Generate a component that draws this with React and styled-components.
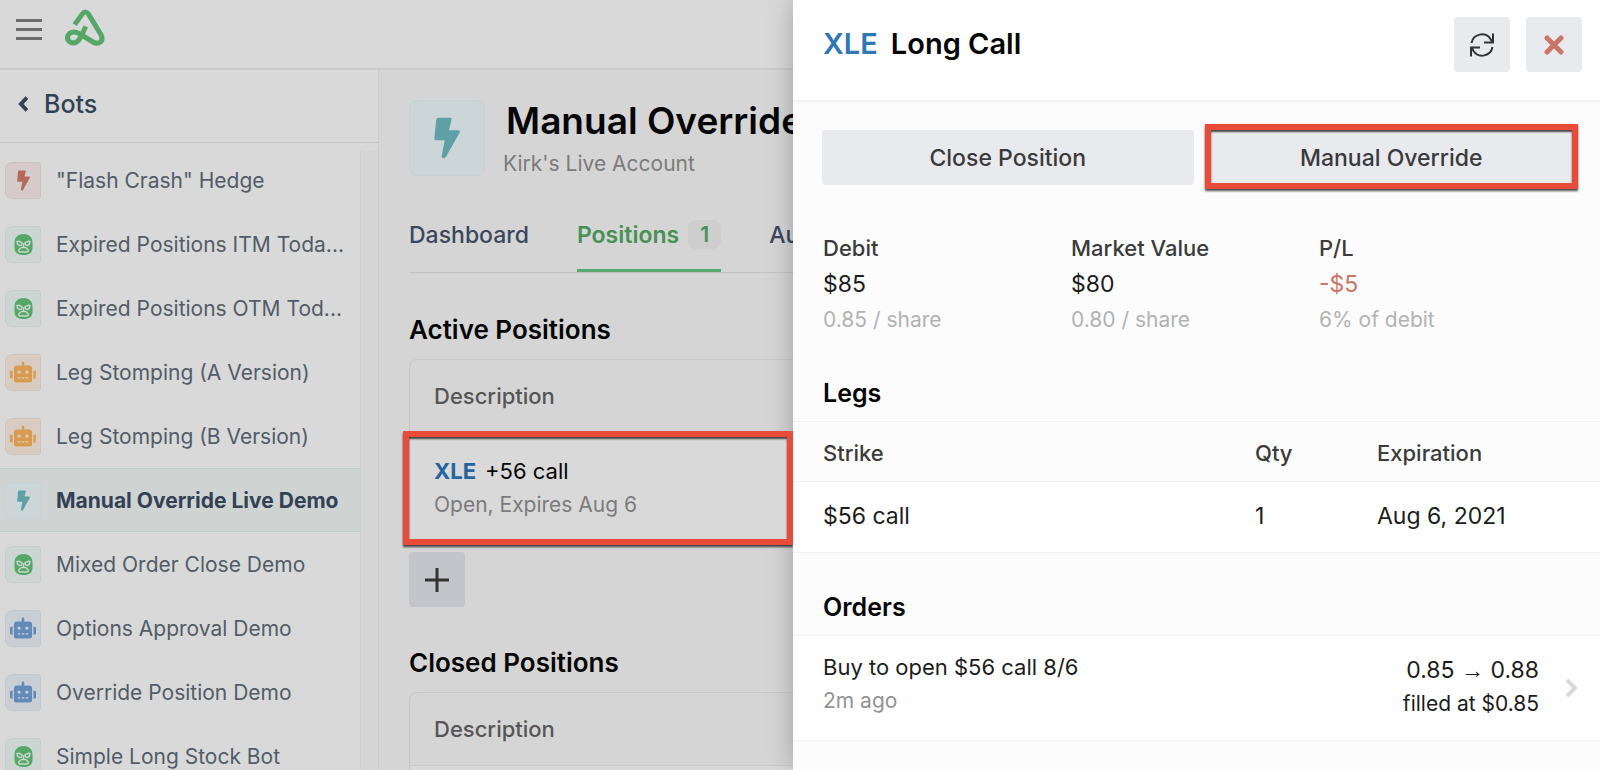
import styled, { createGlobalStyle, css } from "styled-components";
import { FaRobot } from "react-icons/fa";

const GlobalStyle = createGlobalStyle`
  *, *::before, *::after { box-sizing: border-box; }
  body {
    margin: 0;
    font-family: Inter, "Liberation Sans", sans-serif;
    font-size: 22px;
    color: #050505;
    background: #d5d5d5;
  }
  h1, h2, p, ul { margin: 0; padding: 0; }
  button { font: inherit; border: 0; padding: 0; cursor: pointer; }
`;

/* red marker frame laid over whatever is being pointed at */
const marked = css`
  position: relative;

  &::after {
    content: "";
    position: absolute;
    border: 6px solid #e94b3b;
    box-shadow: 0 2px 2px rgba(0, 0, 0, 0.7), inset 0 2px 2px rgba(0, 0, 0, 0.7);
    pointer-events: none;
  }
`;

const Page = styled.div`
  display: grid;
  grid-template-columns: minmax(0, 1fr) 807px;
  height: 100vh;
  overflow: hidden;
`;

const Workspace = styled.div`
  display: grid;
  grid-template-columns: 379px minmax(0, 1fr);
  grid-template-rows: 70px minmax(0, 1fr);
  min-height: 0;
`;

const TopBar = styled.header`
  grid-column: 1 / -1;
  display: flex;
  align-items: flex-start;
  gap: 23px;
  padding: 9px 16px;
  background: #d9d9d9;
  border-bottom: 2px solid #cbcbcb;
`;

const MenuButton = styled.button`
  display: flex;
  flex-direction: column;
  gap: 6px;
  width: 26px;
  padding: 10px 0;
  background: none;

  span {
    height: 3px;
    background: #6b6b6b;
  }
`;

const Sidebar = styled.nav`
  display: flex;
  flex-direction: column;
  min-height: 0;
  background: #d9d9d9;
  border-right: 1px solid #cbcbcb;
`;

const BackButton = styled.button`
  display: flex;
  flex: none;
  align-items: center;
  gap: 16px;
  height: 73px;
  padding: 0 18px 4px;
  background: none;
  border-bottom: 1px solid #c6c6c6;
  font-size: 25px;
  font-weight: 500;
  color: #334155;
`;

const BotList = styled.ul`
  flex: 1;
  min-height: 0;
  margin: 5px 18px 0 0;
  overflow: hidden;
  list-style: none;
  box-shadow: 1px 2px 0 #cecece, 18px 2px 0 #d5d5d5;
`;

const BotLink = styled.a`
  display: flex;
  align-items: center;
  gap: 15px;
  height: 64px;
  padding: 0 5px;
  border: solid transparent;
  border-width: 1px 0;
  font-size: 21px;
  color: #525c68;
  text-decoration: none;
  white-space: nowrap;

  ${(props) => props.$active && css`
    background: #cfd3d1;
    border-color: #b9cbc3;
    color: #334155;
    font-weight: 700;
  `}
`;

const tones = {
  red: { color: "#b5695c", bg: "#d6caca", line: "#cfc0c0" },
  green: { color: "#55a768", bg: "#ccd5d2", line: "#c0cfca" },
  orange: { color: "#d99b50", bg: "#d9cdc3", line: "#d3c3b5" },
  teal: { color: "#5f9fa6", bg: "#ccd6d9", line: "#c5d2d6" },
  blue: { color: "#6389b8", bg: "#cacfd6", line: "#c1c9d2" },
};

const Tile = styled.span`
  display: grid;
  flex: none;
  place-items: center;
  width: ${(props) => (props.$large ? 76 : 36)}px;
  height: ${(props) => (props.$large ? 76 : 37)}px;
  border: 1px solid ${(props) => tones[props.$tone].line};
  border-radius: ${(props) => (props.$large ? "8px" : "7px 3px 3px 7px")};
  background: ${(props) => tones[props.$tone].bg};
  color: ${(props) => tones[props.$tone].color};
`;

const Main = styled.main`
  min-height: 0;
  padding: 30px 0 0 30px;
  overflow: hidden;
`;

const BotHeader = styled.div`
  display: flex;
  gap: 18px;
  white-space: nowrap;
`;

const BotTitle = styled.h1`
  padding-left: 3px;
  font-size: 37px;
  line-height: 42px;
  font-weight: 600;
`;

const Account = styled.p`
  font-size: 21px;
  line-height: 44px;
  color: #7b7b7b;
`;

const Tabs = styled.nav`
  display: flex;
  gap: 48px;
  margin-top: 28px;
  border-bottom: 1px solid #c2c2c2;
  white-space: nowrap;
`;

const Tab = styled.a`
  display: flex;
  align-items: center;
  gap: 9px;
  height: 58px;
  padding-bottom: 14px;
  border-bottom: 3px solid ${(props) => (props.$active ? "#57a86d" : "transparent")};
  font-size: 23px;
  font-weight: ${(props) => (props.$active ? 600 : 500)};
  color: ${(props) => (props.$active ? "#479157" : "#3a475c")};
  text-decoration: none;
`;

const Badge = styled.span`
  width: 33px;
  border-radius: 8px;
  background: #cecece;
  font-size: 21px;
  line-height: 29px;
  text-align: center;
`;

const SectionTitle = styled.h2`
  font-size: 26px;
  line-height: 30px;
  font-weight: 600;
`;

const Positions = styled.section`
  padding-top: ${(props) => props.$top}px;
`;

const PositionTable = styled.table`
  width: 100%;
  margin-top: 14px;
  border: 1px solid #c8c8c8;
  border-right: 0;
  border-radius: 8px 0 0 0;
  border-spacing: 0;

  th {
    height: 73px;
    padding: 0 24px;
    border-bottom: 1px solid #c8c8c8;
    font-weight: 500;
    color: #555;
    text-align: left;
  }

  td {
    height: 110px;
    padding: 0 24px;
    background: #d9d9d9;
    line-height: 33px;
  }
`;

const MarkedRow = styled.tr`
  ${marked}

  &::after {
    inset: -2px 0 -2px -7px;
  }
`;

const Symbol = styled.strong`
  margin-right: 9px;
  font-weight: ${(props) => (props.$dim ? 700 : 600)};
  color: ${(props) => (props.$dim ? "#24659f" : "#2f77b5")};
`;

const Muted = styled.div`
  font-size: 21px;
  color: ${(props) => props.$color || "#7b7b7b"};
`;

const SquareButton = styled.button`
  display: grid;
  place-items: center;
  width: 56px;
  height: 55px;
  border-radius: 4px;
  background: ${(props) => (props.$dim ? "#c4c5ca" : "#e9eaee")};
  color: #333;
`;

const AddButton = styled(SquareButton)`
  margin-top: 8px;
`;

const Drawer = styled.aside`
  min-height: 0;
  overflow: hidden;
  background: #fcfcfc;
`;

const DrawerShell = styled.div`
  display: grid;
  min-height: 0;
  box-shadow: 0 0 24px rgba(0, 0, 0, 0.25);
`;

const DrawerHeader = styled.header`
  display: flex;
  align-items: flex-start;
  gap: 16px;
  height: 102px;
  padding: 17px 18px 0 30px;
  background: #fff;
  border-bottom: 2px solid #f3f3f3;
`;

const DrawerTitle = styled.h2`
  flex: 1;
  font-size: 29px;
  line-height: 54px;
  font-weight: 600;

  ${Symbol} {
    margin-right: 13px;
  }
`;

const Actions = styled.div`
  display: grid;
  grid-template-columns: 1fr 1fr;
  gap: 12px;
  padding: 28px 23px 0 29px;
`;

const ActionButton = styled.button`
  height: 55px;
  border-radius: 4px;
  background: #e9eaee;
  font-size: 23px;
  font-weight: 500;
  color: #3a3a3c;

  ${(props) => props.$marked && css`
    ${marked}

    &::after {
      inset: -6px -1px -4px;
    }
  `}
`;

const Stats = styled.div`
  display: grid;
  grid-template-columns: repeat(3, 248px);
  padding: 45px 30px 1px;
`;

const Stat = styled.div`
  line-height: 36px;
`;

const Label = styled.div`
  font-weight: 500;
  color: #3b3b3b;
`;

const Value = styled.div`
  font-size: 23px;
  color: ${(props) => (props.$loss ? "#cb7568" : "#1c1c1c")};
`;

const DrawerSection = styled.section`
  padding-top: 39px;

  ${SectionTitle} {
    padding: 0 30px;
    font-size: 25px;
  }
`;

const LegTable = styled.table`
  width: 100%;
  margin-top: 13px;
  border-spacing: 0;
  text-align: left;

  th, td {
    padding: 0 0 0 30px;
    border-top: 1px solid #f1f1f1;
  }

  th {
    height: 60px;
    padding-top: 3px;
    font-weight: 500;
    color: #3b3b3b;
  }

  td {
    height: 72px;
    padding-bottom: 3px;
    border-bottom: 1px solid #f1f1f1;
    background: #fff;
    font-size: 23px;
    color: #1c1c1c;
  }

  th:nth-child(1) { width: 432px; }
  th:nth-child(2) { width: 122px; }
`;

const OrderRow = styled.button`
  display: flex;
  align-items: center;
  width: 100%;
  height: 106px;
  margin-top: 13px;
  padding: 0 22px 0 30px;
  border: solid #f1f1f1;
  border-width: 1px 0;
  background: #fff;
  color: #1c1c1c;
  text-align: left;
`;

const OrderText = styled.div`
  padding-bottom: 8px;
  line-height: 33px;
`;

const OrderFill = styled.div`
  margin: 0 26px 0 auto;
  padding-bottom: 3px;
  font-size: 21px;
  line-height: 34px;
  text-align: right;
`;

const FillPrice = styled.div`
  font-size: 23px;

  span { font-family: "Liberation Sans", sans-serif; }
`;

function Logo() {
  return (
    <svg width="40" height="37" viewBox="194 26 120 111" fill="none" stroke="#55a768" strokeWidth="15" aria-label="Home">
      <path d="M223 73L245 42Q255 28 265 42L302 103Q310 120 297 127Q288 131 278 125L237 100Q220 90 208 99Q196 111 206 123Q220 134 234 121Q243 110 256 78" />
    </svg>
  );
}

function Bolt({ size = 13 }) {
  return (
    <svg width={size} height={(size * 21) / 13} viewBox="0 0 80 128" fill="currentColor">
      <path d="M13 2H50Q56 2 54 8L46 40H74Q82 40 79 47L37 122Q33 128 28 126Q23 124 24 118L33 71H6Q0 71 1 65L7 7Q8 2 13 2Z" />
    </svg>
  );
}

function Gorilla() {
  return (
    <svg width="19" height="21" viewBox="0 0 19 21">
      <path d="M9.500 0C15 0 18.500 3.500 18.500 8.500V14C18.500 18.500 15 21 9.500 21S0.500 18.500 0.500 14V8.500C0.500 3.500 4 0 9.500 0Z" fill="currentColor" />
      <g fill="none" stroke="#ccd5d2" strokeWidth="1.400" strokeLinejoin="round">
        <path d="M3 7.500Q6 6.500 8.500 9.500Q7.500 11.500 5.500 11.500Q3 10.500 3 7.500Z" />
        <path d="M16 7.500Q13 6.500 10.500 9.500Q11.500 11.500 13.500 11.500Q16 10.500 16 7.500Z" />
        <path d="M9.500 9.500V13M6 18Q4 17.500 5 15.500L7.500 13.500H11.500L14 15.500Q15 17.500 13 18Z" />
      </g>
    </svg>
  );
}

const icons = {
  bolt: <Bolt />,
  gorilla: <Gorilla />,
  robot: <FaRobot size={26} />,
};

const bots = [
  { name: '"Flash Crash" Hedge', icon: "bolt", tone: "red" },
  { name: "Expired Positions ITM Toda...", icon: "gorilla", tone: "green" },
  { name: "Expired Positions OTM Tod...", icon: "gorilla", tone: "green" },
  { name: "Leg Stomping (A Version)", icon: "robot", tone: "orange" },
  { name: "Leg Stomping (B Version)", icon: "robot", tone: "orange" },
  { name: "Manual Override Live Demo", icon: "bolt", tone: "teal", active: true },
  { name: "Mixed Order Close Demo", icon: "gorilla", tone: "green" },
  { name: "Options Approval Demo", icon: "robot", tone: "blue" },
  { name: "Override Position Demo", icon: "robot", tone: "blue" },
  { name: "Simple Long Stock Bot", icon: "gorilla", tone: "green" },
];

const stats = [
  { label: "Debit", value: "$85", note: "0.85 / share" },
  { label: "Market Value", value: "$80", note: "0.80 / share" },
  { label: "P/L", value: "-$5", note: "6% of debit", loss: true },
];

function BotSidebar() {
  return (
    <Sidebar>
      <BackButton>
        <svg width="10" height="16" viewBox="0 0 10 16" fill="none" stroke="currentColor" strokeWidth="4">
          <path d="M9 1.500L3 8L9 14.500" />
        </svg>
        Bots
      </BackButton>
      <BotList>
        {bots.map((bot) => (
          <li key={bot.name}>
            <BotLink href="#" $active={bot.active}>
              <Tile $tone={bot.tone}>{icons[bot.icon]}</Tile>
              {bot.name}
            </BotLink>
          </li>
        ))}
      </BotList>
    </Sidebar>
  );
}

function BotPage() {
  return (
    <Main>
      <BotHeader>
        <Tile $tone="teal" $large><Bolt size={26} /></Tile>
        <div>
          <BotTitle>Manual Override</BotTitle>
          <Account>Kirk's Live Account</Account>
        </div>
      </BotHeader>
      <Tabs>
        <Tab href="#">Dashboard</Tab>
        <Tab href="#" $active>Positions <Badge>1</Badge></Tab>
        <Tab href="#">Automations</Tab>
      </Tabs>
      <Positions $top={42}>
        <SectionTitle>Active Positions</SectionTitle>
        <PositionTable>
          <thead>
            <tr><th>Description</th></tr>
          </thead>
          <tbody>
            <MarkedRow>
              <td>
                <Symbol $dim>XLE</Symbol>+56 call
                <Muted>Open, Expires Aug 6</Muted>
              </td>
            </MarkedRow>
          </tbody>
        </PositionTable>
        <AddButton $dim aria-label="Add position">
          <svg width="24" height="24" viewBox="0 0 24 24" stroke="currentColor" strokeWidth="3">
            <path d="M12 0V24M0 12H24" />
          </svg>
        </AddButton>
      </Positions>
      <Positions $top={41}>
        <SectionTitle>Closed Positions</SectionTitle>
        <PositionTable>
          <thead>
            <tr><th>Description</th></tr>
          </thead>
          <tbody>
            <tr><td /></tr>
          </tbody>
        </PositionTable>
      </Positions>
    </Main>
  );
}

function PositionDrawer() {
  return (
    <DrawerShell>
      <Drawer>
        <DrawerHeader>
          <DrawerTitle><Symbol>XLE</Symbol>Long Call</DrawerTitle>
          <SquareButton aria-label="Refresh">
            <svg width="24" height="24" viewBox="0 0 24 24" fill="none" stroke="currentColor" strokeWidth="2">
              <path d="M1.500 10A10.500 10.500 0 0 1 20.500 6L22.500 9.500M23 0.500V9.500H14M22.500 14A10.500 10.500 0 0 1 3.500 18L1.500 14.500M1 23.500V14.500H10" />
            </svg>
          </SquareButton>
          <SquareButton aria-label="Close">
            <svg width="20" height="20" viewBox="0 0 20 20" stroke="#cb7568" strokeWidth="5" strokeLinecap="round">
              <path d="M3 3L17 17M17 3L3 17" />
            </svg>
          </SquareButton>
        </DrawerHeader>
        <Actions>
          <ActionButton>Close Position</ActionButton>
          <ActionButton $marked>Manual Override</ActionButton>
        </Actions>
        <Stats>
          {stats.map((stat) => (
            <Stat key={stat.label}>
              <Label>{stat.label}</Label>
              <Value $loss={stat.loss}>{stat.value}</Value>
              <Muted $color="#b2b2b2">{stat.note}</Muted>
            </Stat>
          ))}
        </Stats>
        <DrawerSection>
          <SectionTitle>Legs</SectionTitle>
          <LegTable>
            <thead>
              <tr><th>Strike</th><th>Qty</th><th>Expiration</th></tr>
            </thead>
            <tbody>
              <tr><td>$56 call</td><td>1</td><td>Aug 6, 2021</td></tr>
            </tbody>
          </LegTable>
        </DrawerSection>
        <DrawerSection>
          <SectionTitle>Orders</SectionTitle>
          <OrderRow>
            <OrderText>
              Buy to open $56 call 8/6
              <Muted $color="#929292">2m ago</Muted>
            </OrderText>
            <OrderFill>
              <FillPrice>0.85 <span>→</span> 0.88</FillPrice>
              <div>filled at $0.85</div>
            </OrderFill>
            <svg width="13" height="20" viewBox="0 0 13 20" fill="none" stroke="#d8d8d8" strokeWidth="4">
              <path d="M2 2L10 10L2 18" />
            </svg>
          </OrderRow>
        </DrawerSection>
      </Drawer>
    </DrawerShell>
  );
}

export default function App() {
  return (
    <>
      <GlobalStyle />
      <Page>
        <Workspace>
          <TopBar>
            <MenuButton aria-label="Menu"><span /><span /><span /></MenuButton>
            <Logo />
          </TopBar>
          <BotSidebar />
          <BotPage />
        </Workspace>
        <PositionDrawer />
      </Page>
    </>
  );
}
